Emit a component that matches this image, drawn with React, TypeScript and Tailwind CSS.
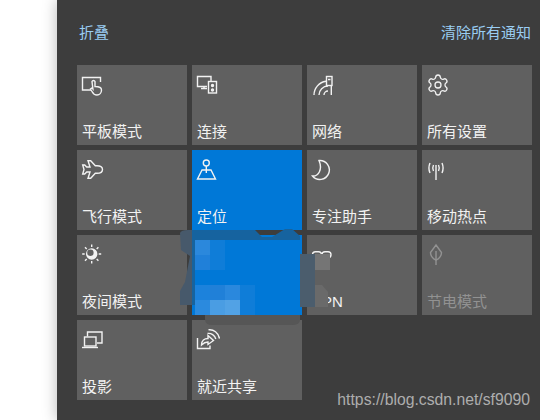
import React from "react";
import { Settings } from "lucide-react";

const Svg = ({ children, className = "" }: { children: React.ReactNode; className?: string }) => (
  <svg width="24" height="24" viewBox="0 0 24 24" fill="none" stroke="currentColor" strokeWidth="1.4" className={className}>
    {children}
  </svg>
);

const icons: Record<string, React.ReactNode> = {
  tablet: (
    <Svg>
      <path d="M10 17H1.500V4.500H19.500V9" />
      <path d="M11 8.500a1.600 1.600 0 0 1 3 0V13.500c3 0 6.500 .5 6.500 3.500 0 3-2 5-4.500 5-3 0-4-1.500-5-3.500l-1.500-2.500 1.500-1 .9 1z" />
    </Svg>
  ),
  connect: (
    <Svg>
      <path d="M11 13.500H1.500V3.500H15V8" />
      <path d="M5 15.500H11M8 13.500V15.500" />
      <rect x="12.500" y="8.500" width="8" height="11.500" />
      <circle cx="16.500" cy="12.500" r="1" fill="currentColor" />
      <circle cx="16.500" cy="17" r="1" fill="currentColor" />
    </Svg>
  ),
  network: (
    <Svg>
      <path d="M13 22a4 4 0 0 1 4-4" />
      <path d="M8 22a9 9 0 0 1 9-9" />
      <path d="M3 22a14 14 0 0 1 12-13.800" />
      <rect x="15.500" y="3.500" width="5.500" height="9" />
      <path d="M17 6.500h2.500M20.300 12.500V22" />
    </Svg>
  ),
  plane: (
    <Svg>
      <path d="M21.500 11.500C21.500 9 19 7.700 16 7.700H14.300L9.700 2.700H7L9 9H5.700L3.700 7H1.700L3 11.500L1.700 16H3.700L5.700 14H9L7 20.300H9.700L14.300 15.300H16C19 15.300 21.500 14 21.500 11.500Z" />
    </Svg>
  ),
  location: (
    <Svg>
      <circle cx="10.300" cy="5" r="3" />
      <path d="M10.300 8V15M6 12L1.500 21H19.500L15 12Z" />
    </Svg>
  ),
  moon: (
    <Svg>
      <path d="M8 2.500A9.500 9.500 0 1 1 1.500 18C7 18.500 12 12 8 2.500Z" />
    </Svg>
  ),
  hotspot: (
    <Svg>
      <path d="M10 7V22" />
      <path d="M7.500 7C6.500 9 6.500 11 7.500 13M12.500 7C13.500 9 13.500 11 12.500 13" />
      <path d="M4 5C2.700 8 2.700 12 4 15M16 5C17.300 8 17.300 12 16 15" />
    </Svg>
  ),
  sun: (
    <Svg>
      <circle cx="10.700" cy="11" r="5" fill="currentColor" />
      <circle cx="9.400" cy="9.700" r="3.200" fill="#606060" stroke="none" />
      <path d="M10.700 1.500V4M10.700 18V20.500M1.200 11H3.700M17.700 11H20.200M4 4.300L5.700 6M15.700 16L17.400 17.700M4 17.700L5.700 16M15.700 6L17.400 4.300" />
    </Svg>
  ),
  vpn: (
    <Svg>
      <rect x="1.500" y="8.700" width="9" height="6" rx="3" />
      <rect x="11" y="8.700" width="9" height="6" rx="3" />
    </Svg>
  ),
  leaf: (
    <Svg>
      <path d="M10 2L15.500 9.500C15.500 13 12.500 16.500 10 17C7.500 16.500 4.500 13 4.500 9.500Z" />
      <path d="M10 8V22" />
    </Svg>
  ),
  project: (
    <Svg>
      <path d="M6.500 8.500V4H21V15H16" />
      <rect x="3.500" y="9" width="11.500" height="9" />
      <path d="M1 19.500H17" />
    </Svg>
  ),
  share: (
    <Svg>
      <path d="M1.500 10V20.500H14V17.500" />
      <path d="M5.500 17C5.500 12.500 8.500 10.500 12 10.500V7.500L17.500 12.500L12 16.500V14C9.500 14 7.500 15 5.500 17Z" />
      <path d="M11.500 5.500C15 4.800 19 7.500 19.800 11" />
      <path d="M12.500 1.800C17.500 1 22.500 5 23.500 10.500" />
    </Svg>
  ),
};

type T = { label: string; icon: React.ReactNode; tone?: "on" | "off" };

const tiles: T[] = [
  { label: "平板模式", icon: icons.tablet },
  { label: "连接", icon: icons.connect },
  { label: "网络", icon: icons.network },
  { label: "所有设置", icon: <Settings size={24} strokeWidth={1.3} /> },
  { label: "飞行模式", icon: icons.plane },
  { label: "定位", icon: icons.location, tone: "on" },
  { label: "专注助手", icon: icons.moon },
  { label: "移动热点", icon: icons.hotspot },
  { label: "夜间模式", icon: icons.sun },
  { label: "", icon: null, tone: "on" },
  { label: "VPN", icon: icons.vpn },
  { label: "节电模式", icon: icons.leaf, tone: "off" },
  { label: "投影", icon: icons.project },
  { label: "就近共享", icon: icons.share },
];

function Tile({ t }: { t: T }) {
  const bg = t.tone === "on" ? "bg-[#0078d7]" : "bg-[#606060]";
  const fg = t.tone === "off" ? "text-[#929292]" : "text-[#f2f2f2]";
  return (
    <div className={`h-20 flex flex-col justify-between pl-[5px] pt-2 pb-[2px] ${bg} ${fg}`}>
      <div className="h-6 -ml-px">{t.icon}</div>
      <div className="text-[15px] leading-[22px]">{t.label}</div>
    </div>
  );
}

export default function App() {
  return (
    <div className="relative h-[420px] w-[540px] overflow-hidden bg-white font-['Liberation_Sans','Noto_Sans_CJK_SC',sans-serif]">
      <div className="ml-[57px] h-full bg-[#3d3d3d] pl-5 pr-2 shadow-[0_0_14px_rgba(0,0,0,0.28)]">
        <div className="flex h-[65px] items-start justify-between pl-0.5 pr-px pt-[22px] text-[15px] leading-[22px] text-[#9acdf3]">
          <span>折叠</span>
          <span>清除所有通知</span>
        </div>
        <div className="grid grid-cols-[repeat(4,110px)] gap-[5px]">
          {tiles.map((t, i) => (
            <Tile key={i} t={t} />
          ))}
        </div>
      </div>

      {/* mosaic that hides part of the picture */}
      <svg className="absolute left-0 top-0" width="540" height="420" viewBox="0 0 540 420">
        <path d="M205 310H300V320Q300 325 292 325H212Q205 325 205 319Z" fill="#565656" />
        <path d="M300 254H315V307H300Z" fill="#4b5d6d" />
        <rect x="315" y="254" width="15" height="16" fill="#757575" />
        <path d="M315 285H322L328 292V307H315Z" fill="#6a6a6a" />
        <path d="M180 233Q181 230 188 230H192V305H180V291L185 282L190 256L181 250Z" fill="#47596b" />
        <path d="M192 230H255L262 237H272L285 229H292L300 236V240H192Z" fill="#16639f" />
        <rect x="192" y="230" width="3" height="75" fill="#16639f" />
        <rect x="195" y="240" width="105" height="75" fill="#0078d7" />
        <rect x="195" y="240" width="15" height="15" fill="#2b88dc" />
        <rect x="210" y="240" width="15" height="30" fill="#0f7dd8" />
        <rect x="195" y="255" width="15" height="15" fill="#2080d9" />
        <rect x="195" y="285" width="15" height="15" fill="#1c82dc" />
        <rect x="210" y="285" width="15" height="15" fill="#2080d8" />
        <rect x="225" y="285" width="15" height="15" fill="#2a88dd" />
        <rect x="240" y="285" width="15" height="30" fill="#0f7dd8" />
        <rect x="195" y="300" width="15" height="15" fill="#2b8ade" />
        <rect x="210" y="300" width="15" height="15" fill="#4a9de3" />
        <rect x="225" y="300" width="15" height="15" fill="#52a2e5" />
      </svg>

      <div className="absolute bottom-[9px] right-[10px] text-[15.75px] leading-[22px] text-[#adadad]">
        https://blog.csdn.net/sf9090
      </div>
    </div>
  );
}
